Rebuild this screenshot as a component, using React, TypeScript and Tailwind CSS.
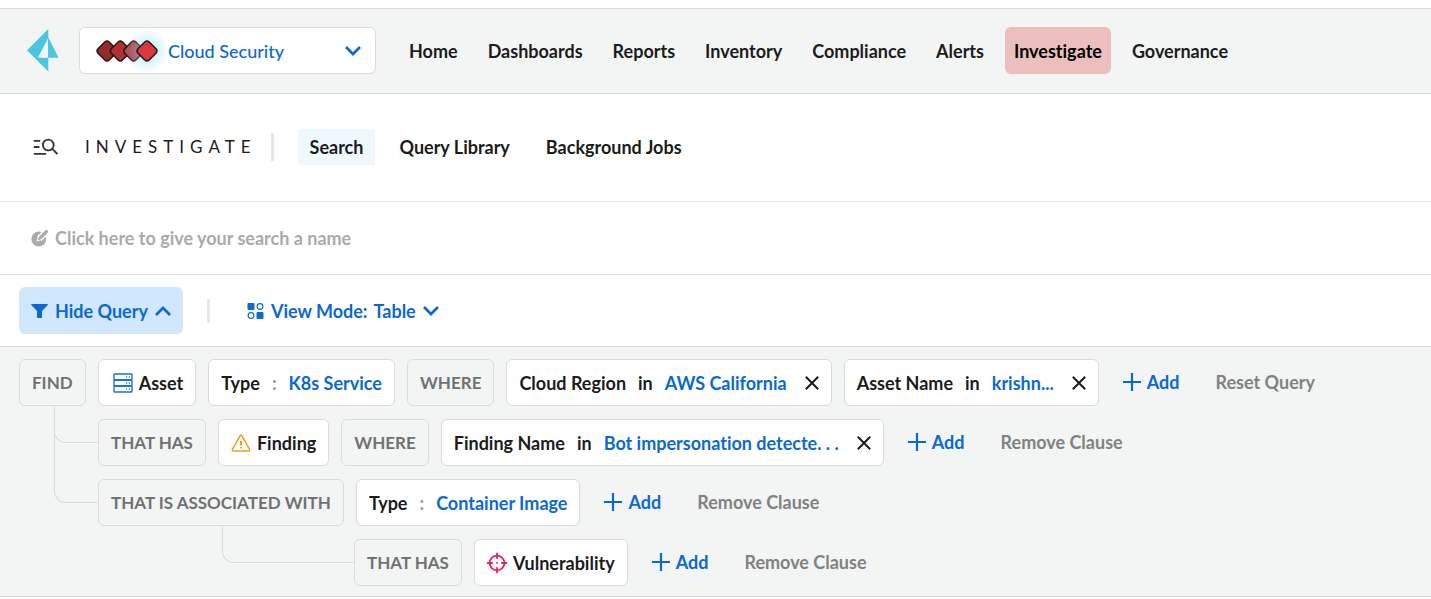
import type { ReactNode } from "react";

const NAV = ["Home", "Dashboards", "Reports", "Inventory", "Compliance", "Alerts", "Investigate", "Governance"];
const TABS = ["Search", "Query Library", "Background Jobs"];

function Logo() {
  return (
    <svg width="32" height="43" viewBox="0 0 32 43" aria-hidden="true">
      <path d="M21.3 0 0 21.3 21.3 42.5V28.8H10.8L21 9.5V28.8H31.6L21.3 8.5Z" fill="#4cc5e0" />
    </svg>
  );
}

function Gems() {
  const gem = "M-2.2 -9 Q0 -11 2.2 -9 L9 -2.2 Q11 0 9 2.2 L2.2 9 Q0 11 -2.2 9 L-9 2.2 Q-11 0 -9 -2.2Z";
  return (
    <svg width="62" height="22" viewBox="0 0 62 22" className="shrink-0 overflow-visible" aria-hidden="true">
      <defs>
        <radialGradient id="glow">
          <stop offset="0.3" stopColor="#8fd8f5" stopOpacity="0.75" />
          <stop offset="1" stopColor="#8fd8f5" stopOpacity="0" />
        </radialGradient>
      </defs>
      <g stroke="#241717" strokeWidth="1.5">
        <path d={gem} transform="translate(11 11)" fill="#962b2b" />
        <path d={gem} transform="translate(24.3 11)" fill="#b03033" />
        <path d={gem} transform="translate(37.7 11)" fill="#b9404a" />
      </g>
      <circle cx="51" cy="11" r="22" fill="url(#glow)" opacity="0.6" />
      <path d={gem} transform="translate(51 11)" fill="#d63a3a" stroke="#241717" strokeWidth="1.5" />
    </svg>
  );
}

function Chevron({ up = false }: { up?: boolean }) {
  return (
    <svg width="16" height="10" viewBox="0 0 16 10" fill="none" stroke="currentColor" strokeWidth="2.7" className="shrink-0" aria-hidden="true">
      <path d={up ? "M1 9 8 2l7 7" : "M1 1l7 7 7-7"} />
    </svg>
  );
}

function InvestigateIcon() {
  return (
    <svg width="26" height="18" viewBox="0 0 26 18" fill="none" stroke="#333" strokeWidth="1.8" aria-hidden="true">
      <path d="M1.8 2.8h6.4M1.8 9h5.6M1.8 15.8h12.4" />
      <circle cx="16.3" cy="7" r="5.4" />
      <path d="m20.2 10.8 5.2 5.2" />
    </svg>
  );
}

function EditIcon() {
  return (
    <svg width="18" height="18" viewBox="0 0 18 18" fill="none" aria-hidden="true">
      <circle cx="7.8" cy="10" r="7.4" fill="#aaa" />
      <path d="M8.2 9.8 18 0" stroke="#fff" strokeWidth="6.2" />
      <path d="M9.4 8.6 15.4 2.6" stroke="#aaa" strokeWidth="3.4" strokeLinecap="round" />
      <path d="M6.2 11.8 7.4 8.4 9.6 10.6Z" fill="#aaa" stroke="#fff" strokeWidth="1.2" />
      <path d="M6.6 11.4 8 7.6 10.4 10Z" fill="#aaa" />
    </svg>
  );
}

function FunnelIcon() {
  return (
    <svg width="17" height="16" viewBox="0 0 17 16" fill="currentColor" aria-hidden="true">
      <path d="M.6 1h15.8a.5.5 0 0 1 .3.9L11 8v6.4a.7.7 0 0 1-.8.6H6.8a.7.7 0 0 1-.8-.6V8L.3 1.9A.5.5 0 0 1 .6 1Z" />
    </svg>
  );
}

function ModeIcon() {
  return (
    <svg width="17" height="16" viewBox="0 0 17 16" fill="currentColor" aria-hidden="true">
      <rect x="0.5" y="0" width="7" height="7" rx="1" />
      <rect x="9.5" y="9" width="7" height="7" rx="1" />
      <g fill="none" stroke="currentColor" strokeWidth="1.1">
        <circle cx="13" cy="3.5" r="2.9" />
        <circle cx="4" cy="12.5" r="2.9" />
      </g>
    </svg>
  );
}

function AssetIcon() {
  return (
    <svg width="22" height="20" viewBox="-2 0 22 20" fill="none" stroke="#1a73d8" strokeWidth="1.4" aria-hidden="true">
      <rect x="1" y="1" width="18" height="5.6" rx="0.5" />
      <rect x="1" y="7.2" width="18" height="5.6" rx="0.5" />
      <rect x="1" y="13.4" width="18" height="5.6" rx="0.5" />
      <path d="M13 3.9h1.2M15.8 3.9H17M13 10h1.2M15.8 10H17M13 16.1h1.2M15.8 16.1H17" />
    </svg>
  );
}

function FindingIcon() {
  return (
    <svg width="20" height="18" viewBox="0 0 20 18" fill="none" stroke="#f59a23" strokeWidth="1.5" strokeLinejoin="round" aria-hidden="true">
      <path d="M9.2 1.6a.9.9 0 0 1 1.6 0l7.9 14a.9.9 0 0 1-.8 1.3H2.1a.9.9 0 0 1-.8-1.3Z" />
      <path d="M10 7v4.4M10 12.9v1.7" strokeWidth="2" />
    </svg>
  );
}

function TargetIcon() {
  return (
    <svg width="20" height="22" viewBox="0 0 20 22" fill="none" stroke="#e6245f" strokeWidth="1.8" aria-hidden="true">
      <circle cx="10" cy="11" r="7.4" />
      <path d="M10 .8v6M10 15.2v6M0 11h5.8M14.2 11H20" />
      <circle cx="10" cy="11" r="0.9" fill="#e6245f" stroke="none" />
    </svg>
  );
}

function Keyword({ children }: { children: ReactNode }) {
  return (
    <span className="flex h-[47px] shrink-0 items-center rounded-md border border-[#dadcdc] px-3 text-[17px] text-[#707272]">
      {children}
    </span>
  );
}

const CHIP = "flex h-[47px] shrink-0 items-center rounded-md border border-[#dadcdc] bg-white px-3";

function Entity({ icon, children }: { icon: ReactNode; children: ReactNode }) {
  return (
    <button type="button" className={`${CHIP} gap-1.5`}>
      {icon}
      {children}
    </button>
  );
}

function Filter({ name, op, value, removable = false }: { name: string; op: string; value: string; removable?: boolean }) {
  return (
    <div className={`${CHIP} gap-3`}>
      <span>{name}</span>
      <span className={op === ":" ? "text-[#999]" : ""}>{op}</span>
      <button type="button" className="text-[#0b69cf]">{value}</button>
      {removable && (
        <button type="button" aria-label={`Remove ${name}`} className="ml-1.5">
          <svg width="14" height="14" viewBox="0 0 14 14" stroke="currentColor" strokeWidth="2" aria-hidden="true">
            <path d="m.8.8 12.4 12.4M13.2.8.8 13.2" />
          </svg>
        </button>
      )}
    </div>
  );
}

function Actions({ label }: { label: string }) {
  return (
    <div className="flex shrink-0 items-center gap-9 pb-0.5 pl-3">
      <button type="button" className="flex items-center gap-1.5 text-[#0b69cf]">
        <svg width="18" height="18" viewBox="0 0 18 18" stroke="currentColor" strokeWidth="2.2" aria-hidden="true">
          <path d="M9 0v18M0 9h18" />
        </svg>
        Add
      </button>
      <button type="button" className="text-[#808282]">{label}</button>
    </div>
  );
}

export default function App() {
  return (
    <div className="bg-white pt-2 font-['Lato',sans-serif] text-[18px] leading-6 font-bold whitespace-nowrap text-[#1c1c1c] [font-variant-ligatures:no-common-ligatures]">
      <header className="flex h-[86px] items-center border-y border-[#dcdede] bg-[#f3f5f5] pb-px pl-[27px]">
        <a href="#home" aria-label="Prisma home">
          <Logo />
        </a>
        <label className="ml-5 flex h-[47px] w-[297px] shrink-0 items-center gap-2.5 rounded-md border border-[#dadcdc] bg-white pr-3.5 pl-4">
          <Gems />
          <select aria-label="Product" className="min-w-0 flex-1 appearance-none bg-transparent font-medium text-[#0b69cf]">
            <option>Cloud Security</option>
          </select>
          <span className="text-[#0b69cf]">
            <Chevron />
          </span>
        </label>
        <nav className="ml-6 flex gap-3">
          {NAV.map((item) => (
            <a
              key={item}
              href={`#${item.toLowerCase()}`}
              className={`flex h-[47px] items-center rounded-md px-[9px] ${item === "Investigate" ? "bg-[#ecbfbf] text-black" : ""}`}
            >
              {item}
            </a>
          ))}
        </nav>
      </header>

      <div className="flex h-[108px] items-center border-b border-[#e4e6e6] pb-px pl-8">
        <InvestigateIcon />
        <h1 className="ml-[27px] text-[17px] font-normal tracking-[6px]">INVESTIGATE</h1>
        <span className="ml-3.5 h-7 w-[3px] bg-[#e6e6e6]" />
        <nav className="ml-6 flex gap-3">
          {TABS.map((tab, i) => (
            <a key={tab} href={`#tab-${i}`} className={`flex h-9 items-center rounded-t px-3 ${i === 0 ? "bg-[#eff8ff]" : ""}`}>
              {tab}
            </a>
          ))}
        </nav>
      </div>

      <div className="flex h-[73px] items-center border-b border-[#dcdede] pl-[31px]">
        <button type="button" className="flex items-center gap-1.5 text-[#aaa]">
          <EditIcon />
          Click here to give your search a name
        </button>
      </div>

      <div className="flex h-[71px] items-center pl-[19px] text-[#0b69cf]">
        <button type="button" className="flex h-[47px] items-center gap-[7px] rounded-md bg-[#d0e7fe] px-3">
          <FunnelIcon />
          Hide Query
          <Chevron up />
        </button>
        <span className="ml-6 h-6 w-[3px] bg-[#e9e9e9]" />
        <button type="button" className="ml-[37px] flex items-center gap-[7px]">
          <ModeIcon />
          <span className="flex gap-1.5">
            <span>View Mode:</span>
            <span>Table</span>
          </span>
          <Chevron />
        </button>
      </div>

      <main className="flex flex-col gap-[13px] border-y border-[#dadcdc] bg-[#f3f5f5] pt-3 pb-2.5 pl-[19px]">
        <div className="flex gap-3">
          <Keyword>FIND</Keyword>
          <Entity icon={<AssetIcon />}>Asset</Entity>
          <Filter name="Type" op=":" value="K8s Service" />
          <Keyword>WHERE</Keyword>
          <Filter name="Cloud Region" op="in" value="AWS California" removable />
          <Filter name="Asset Name" op="in" value="krishn..." removable />
          <Actions label="Reset Query" />
        </div>
        <div className="flex">
          <span className="-mt-[13px] ml-[35px] h-[37px] w-11 shrink-0 rounded-bl-xl border-b border-l border-[#dadcdc]" />
          <div className="flex gap-3">
            <Keyword>THAT HAS</Keyword>
            <Entity icon={<FindingIcon />}>Finding</Entity>
            <Keyword>WHERE</Keyword>
            <Filter name="Finding Name" op="in" value="Bot impersonation detecte. . ." removable />
            <Actions label="Remove Clause" />
          </div>
        </div>
        <div className="flex">
          <span className="-mt-[73px] ml-[35px] h-[97px] w-11 shrink-0 rounded-bl-xl border-b border-l border-[#dadcdc]" />
          <div className="flex gap-3">
            <Keyword>THAT IS ASSOCIATED WITH</Keyword>
            <Filter name="Type" op=":" value="Container Image" />
            <Actions label="Remove Clause" />
          </div>
        </div>
        <div className="flex">
          <span className="-mt-[13px] ml-[203px] h-[37px] w-[132px] shrink-0 rounded-bl-xl border-b border-l border-[#dadcdc]" />
          <div className="flex gap-3">
            <Keyword>THAT HAS</Keyword>
            <Entity icon={<TargetIcon />}>Vulnerability</Entity>
            <Actions label="Remove Clause" />
          </div>
        </div>
      </main>
    </div>
  );
}
